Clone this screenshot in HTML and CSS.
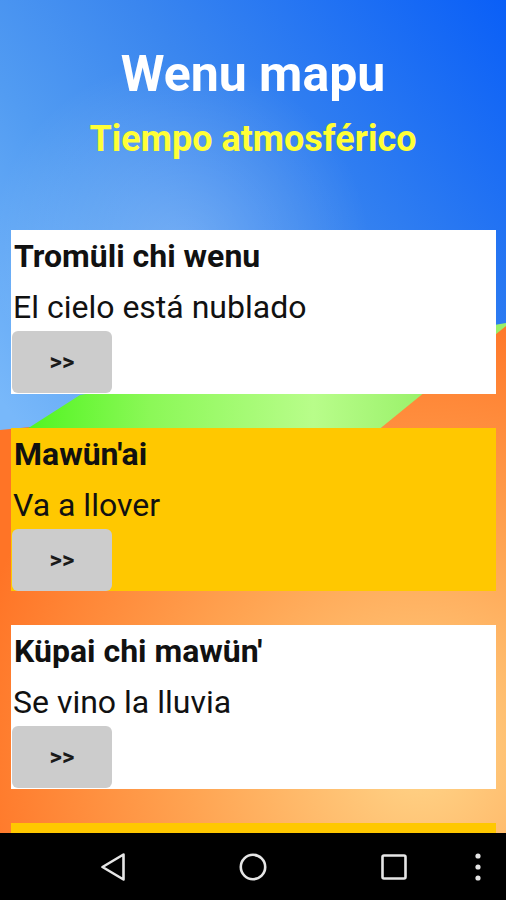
FILE: index.html
```html
<!DOCTYPE html>
<html>
<head>
  <meta charset="utf-8">
  <title>Wenu mapu</title>
  <link rel="stylesheet" href="styles.css">
</head>
<body>
  <div class="screen">
    <div class="app">
      <div class="header">
        <h1 class="title">Wenu mapu</h1>
        <h2 class="subtitle">Tiempo atmosférico</h2>
      </div>

      <div class="list">
        <div class="card">
          <div class="word">Tromüli chi wenu</div>
          <div class="meaning">El cielo está nublado</div>
          <button class="next">&gt;&gt;</button>
        </div>

        <div class="card yellow">
          <div class="word">Mawün'ai</div>
          <div class="meaning">Va a llover</div>
          <button class="next">&gt;&gt;</button>
        </div>

        <div class="card">
          <div class="word">Küpai chi mawün'</div>
          <div class="meaning">Se vino la lluvia</div>
          <button class="next">&gt;&gt;</button>
        </div>

        <div class="card yellow"></div>
      </div>
    </div>

    <div class="navbar">
      <svg class="nav-back" width="24" height="28" viewBox="0 0 24 28">
        <path d="M22.5 1.5 L1.5 14 L22.5 26.5 Z" fill="none" stroke="#e6e6e6" stroke-width="2.6" stroke-linejoin="round"/>
      </svg>
      <svg class="nav-home" width="28" height="28" viewBox="0 0 28 28">
        <circle cx="14" cy="14" r="12.2" fill="none" stroke="#e6e6e6" stroke-width="2.6"/>
      </svg>
      <svg class="nav-recent" width="26" height="26" viewBox="0 0 26 26">
        <rect x="1.5" y="1.5" width="23" height="23" rx="1.5" fill="none" stroke="#e6e6e6" stroke-width="2.6"/>
      </svg>
      <svg class="nav-more" width="6" height="28" viewBox="0 0 6 28">
        <circle cx="3" cy="3" r="2.6" fill="#e6e6e6"/>
        <circle cx="3" cy="14" r="2.6" fill="#e6e6e6"/>
        <circle cx="3" cy="25" r="2.6" fill="#e6e6e6"/>
      </svg>
    </div>
  </div>
</body>
</html>
```

FILE: styles.css
```css
* {
  box-sizing: border-box;
}
body {
  margin: 0;
  font-family: Roboto, "Noto Sans", sans-serif;
  background-color: #000;
}
.screen {
  width: 506px;
  height: 900px;
  display: flex;
  flex-direction: column;
}
.app {
  height: 833px;
  overflow: hidden;
  background-color: #ff8a3a;
  background-image: url("data:image/svg+xml;utf8,<svg xmlns='http://www.w3.org/2000/svg' width='506' height='833' viewBox='0 0 506 833'><defs><radialGradient id='o' gradientUnits='userSpaceOnUse' cx='420' cy='760' r='460'><stop offset='0' stop-color='%23ffd488'/><stop offset='0.5' stop-color='%23ffa452'/><stop offset='1' stop-color='%23ff7426'/></radialGradient><linearGradient id='g' gradientUnits='userSpaceOnUse' x1='0' y1='0' x2='506' y2='0'><stop offset='0.05' stop-color='%2350f520'/><stop offset='0.3' stop-color='%238cf858'/><stop offset='0.62' stop-color='%23b8fd8a'/><stop offset='0.85' stop-color='%2398f068'/></linearGradient><linearGradient id='b' gradientUnits='userSpaceOnUse' x1='506' y1='0' x2='0' y2='400'><stop offset='0' stop-color='%230a5ff7'/><stop offset='0.45' stop-color='%233a86ef'/><stop offset='0.7' stop-color='%23529cf2'/><stop offset='1' stop-color='%2378b8fa'/></linearGradient><radialGradient id='w' gradientUnits='userSpaceOnUse' cx='180' cy='250' r='190'><stop offset='0' stop-color='white' stop-opacity='0.22'/><stop offset='1' stop-color='white' stop-opacity='0'/></radialGradient></defs><rect width='506' height='833' fill='url(%23o)'/><path d='M20 440 L120 300 L506 300 L506 326 L366 440 Z' fill='url(%23g)'/><path d='M0 0 H506 V323 L80 395 L30 427 L0 430 Z' fill='url(%23b)'/><path d='M0 0 H506 V323 L80 395 L30 427 L0 430 Z' fill='url(%23w)'/></svg>");
  background-repeat: no-repeat;
}
.header {
  height: 230px;
  padding-top: 46px;
  text-align: center;
}
.title {
  margin: 0;
  font-size: 50px;
  line-height: 56px;
  font-weight: bold;
  color: #fff;
}
.subtitle {
  margin: 17px 0 0;
  font-size: 36px;
  line-height: 40px;
  font-weight: bold;
  color: #ffff36;
}
.list {
  display: flex;
  flex-direction: column;
  gap: 34px;
  padding: 0 10px 0 11px;
}
.card {
  height: 163.5px;
  flex-shrink: 0;
  background-color: #fff;
  color: #111;
}
.card.yellow {
  background-color: #ffc800;
}
.word {
  padding: 1px 0 0 3px;
  font-size: 32px;
  line-height: 50px;
  font-weight: bold;
}
.meaning {
  padding: 3px 0 0 2px;
  font-size: 32px;
  line-height: 46px;
}
.next {
  display: block;
  width: 100px;
  height: 62px;
  margin: 1px 0 0 1px;
  border: none;
  border-radius: 6px;
  background-color: #cccccc;
  color: #1a1a1a;
  font-family: Roboto, sans-serif;
  font-size: 24px;
  font-weight: bold;
  cursor: pointer;
}
.navbar {
  height: 67px;
  background-color: #000;
  display: flex;
  align-items: center;
}
.nav-back {
  margin-left: 101px;
}
.nav-home {
  margin-left: 114px;
}
.nav-recent {
  margin-left: 114px;
}
.nav-more {
  margin-left: 68px;
}
```
